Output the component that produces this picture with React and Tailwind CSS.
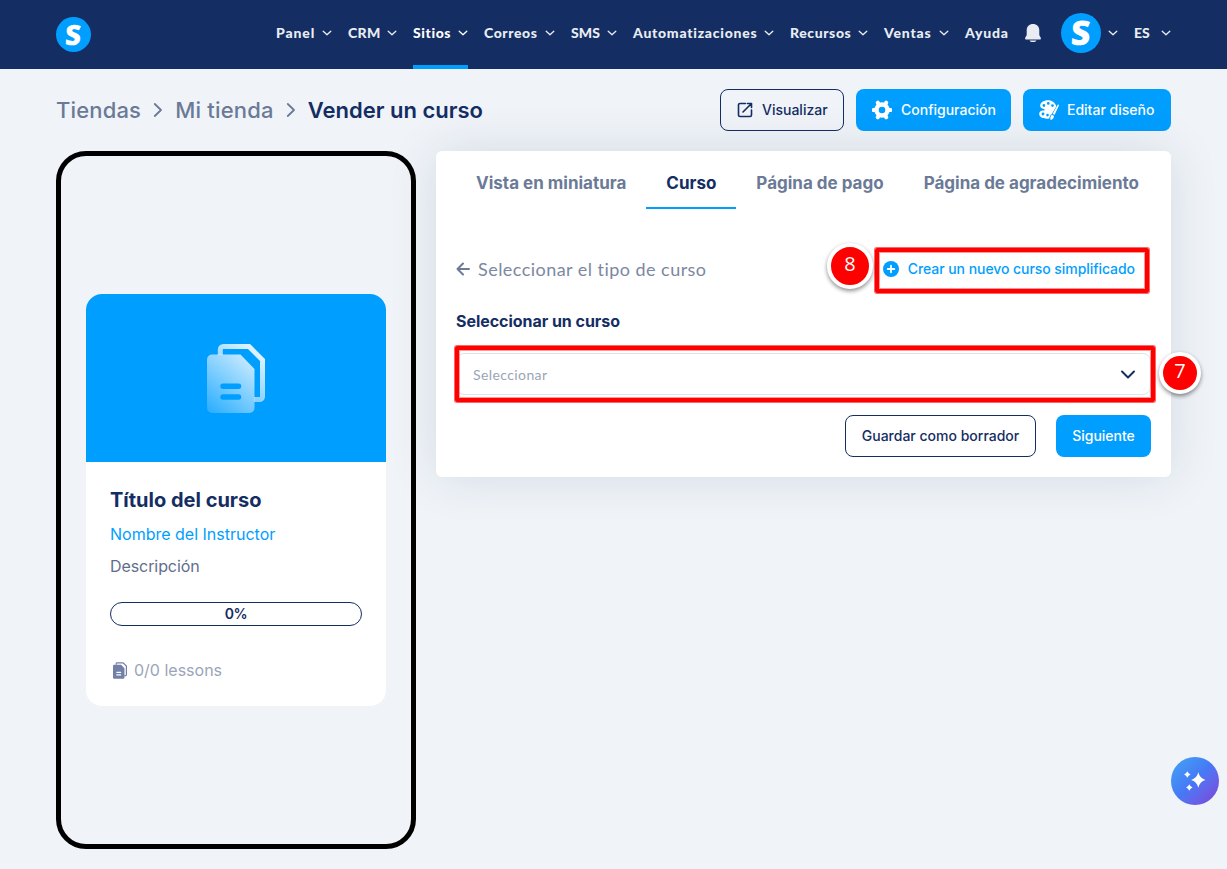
import clsx from 'clsx'

const navItems = [
  { label: 'Panel', width: 'w-14', spacing: 'tracking-[0.9px]' },
  { label: 'CRM', width: 'w-[49px]', spacing: 'tracking-[0.3px]' },
  { label: 'Sitios', width: 'w-[55px]', spacing: 'tracking-[0.6px]', active: true },
  { label: 'Correos', width: 'w-[71px]', spacing: 'tracking-[0.6px]' },
  { label: 'SMS', width: 'w-[46px]', spacing: 'tracking-[0.1px]' },
  { label: 'Automatizaciones', width: 'w-[141px]', spacing: 'tracking-[0.74px]' },
  { label: 'Recursos', width: 'w-[78px]', spacing: 'tracking-[0.6px]' },
  { label: 'Ventas', width: 'w-[65px]', spacing: 'tracking-[0.8px]' },
]

const tabs = [
  { label: 'Vista en miniatura' },
  { label: 'Curso', active: true },
  { label: 'Página de pago' },
  { label: 'Página de agradecimiento' },
]

function NavChevron() {
  return (
    <svg className="mt-[-1px] h-2.5 w-2.5 shrink-0" viewBox="0 0 10 10" fill="none" stroke="currentColor" strokeWidth="1.3" strokeLinecap="round" strokeLinejoin="round">
      <path d="M1.2 3.2 5 6.8 8.8 3.2" />
    </svg>
  )
}

function Logo({ className }) {
  return (
    <div className={clsx('flex shrink-0 items-center justify-center rounded-full bg-[#009eff] font-["Open_Sans"] leading-none font-extrabold text-white', className)}>
      <span className="-skew-x-3">S</span>
    </div>
  )
}

function ChevronRight() {
  return (
    <svg className="h-4 w-2.5" viewBox="0 0 10 16" fill="none" stroke="#6b7a96" strokeWidth="1.8" strokeLinecap="round" strokeLinejoin="round">
      <path d="M1.8 2 8 8l-6.200 6" />
    </svg>
  )
}

function PagesIcon({ className, children, fill }) {
  return (
    <svg className={className} viewBox="0 0 58 69" fill="none">
      <defs>{children}</defs>
      <path d="M13.300 11V5.500a3 3 0 0 1 3-3H42L55.500 16V52.500a3 3 0 0 1-3 3H47" stroke={fill} strokeWidth="5" />
      <path fillRule="evenodd" fill={fill} d="M5 10.500H33.500L47.500 25V64a5 5 0 0 1-5 5H5a5 5 0 0 1-5-5V15.500a5 5 0 0 1 5-5ZM16 39.500a2.750 2.750 0 0 0 0 5.500H31.500a2.750 2.750 0 0 0 0-5.500ZM16 50.200a2.750 2.750 0 0 0 0 5.500H31.500a2.750 2.750 0 0 0 0-5.500Z" />
    </svg>
  )
}

function Header() {
  return (
    <header className="flex h-[69px] items-center bg-[#142d63] pr-14 pl-14">
      <Logo className="h-[35px] w-[35px] pb-px text-[28px]" />
      <nav className="ml-auto flex h-full items-center gap-4 font-[Lato] text-sm font-black text-[#e9edf3]">
        {navItems.map((item) => (
          <div key={item.label} className={clsx('flex h-full items-center justify-between border-y-4 border-t-transparent pb-[3px]', item.width, item.active ? 'border-b-[#009eff] text-white' : 'border-b-transparent')}>
            <span className={item.spacing}>{item.label}</span>
            <NavChevron />
          </div>
        ))}
        <span className="w-11 pb-[3px] tracking-[0.8px]">Ayuda</span>
        <svg className="mb-[3px] h-[18px] w-4" viewBox="0 0 16 18" fill="currentColor">
          <path d="M8 0C4.300 0 1.700 2.600 1.700 6v4.800c0 1.300-1.600 2.200-1.600 3.600 0 .6.400 1.100 1 1.100h13.800c.6 0 1-.5 1-1.100 0-1.400-1.600-2.300-1.600-3.600V6C14.300 2.600 11.700 0 8 0ZM4.500 16.500h7c-.5 1-1.800 1.500-3.500 1.500s-3-.5-3.500-1.500Z" />
        </svg>
        <div className="ml-1 flex items-center gap-[7px] pb-[3px]">
          <Logo className="h-10 w-10 pb-0.5 text-[34px]" />
          <NavChevron />
        </div>
        <div className="flex w-[37px] items-center justify-between pb-[3px]">
          <span>ES</span>
          <NavChevron />
        </div>
      </nav>
    </header>
  )
}

function Toolbar() {
  return (
    <div className="flex h-[82px] items-center justify-between px-14">
      <div className="flex items-center text-[22px] font-medium text-[#6b7a96]">
        <span className="tracking-[0.16px]">Tiendas</span>
        <span className="mx-3"><ChevronRight /></span>
        <span className="tracking-[0.2px]">Mi tienda</span>
        <span className="mx-3"><ChevronRight /></span>
        <span className="font-semibold text-[#142d63]">Vender un curso</span>
      </div>
      <div className="flex gap-3 text-sm font-medium">
        <button className="flex h-[42px] w-[124px] items-center gap-[9px] rounded-lg border border-[#142d63] pl-4 text-[#142d63]">
          <svg className="h-4 w-4" viewBox="0 0 16 16" fill="none" stroke="currentColor" strokeWidth="1.6" strokeLinecap="round" strokeLinejoin="round">
            <path d="M8.500 1.500H3a1.500 1.500 0 0 0-1.500 1.500v10A1.500 1.500 0 0 0 3 14.500h10a1.500 1.500 0 0 0 1.500-1.500V8M10.500 1.500h4V5.500M14.500 1.500 6 10" />
          </svg>
          Visualizar
        </button>
        <button className="flex h-[42px] w-[155px] items-center gap-[9px] rounded-lg bg-[#009eff] pl-4 text-white">
          <svg className="h-5 w-5" viewBox="0 0 20 20" fill="none" stroke="currentColor">
            <circle cx="10" cy="10" r="5.500" strokeWidth="4.400" />
            <path d="M1.600 10h2M16.400 10h2M5.800 2.700l1 1.700M13.200 15.600l1 1.700M14.200 2.700l-1 1.700M6.800 15.600l-1 1.700" strokeWidth="4" strokeLinecap="round" strokeLinejoin="round" />
          </svg>
          Configuración
        </button>
        <button className="flex h-[42px] w-[148px] items-center gap-2 rounded-lg bg-[#009eff] pl-4 text-white">
          <svg className="h-5 w-5" viewBox="0 0 20 20" fill="currentColor">
            <path fillRule="evenodd" d="M9 .2C4.500.2 1.200 2.600 1.200 5.800c0 2.200 1.600 2.600 3.600 3.200 1.400.5 1 1.700-.4 1.600C1.800 10.400.2 11.800.2 14c0 3 3.500 4.700 7.600 4.700.9 0 1.700-.1 2.500-.3.200-1.800 1-3.300 2.300-4.200L17.300 6.500C16.500 2.800 13 .2 9 .2ZM4.900 4.100a1.400 1.400 0 1 1 0 2.800 1.400 1.400 0 0 1 0-2.800ZM9.300 2a1.400 1.400 0 1 1 0 2.800 1.400 1.400 0 0 1 0-2.800ZM13.500 4.200a1.400 1.400 0 1 1 0 2.800 1.400 1.400 0 0 1 0-2.800ZM4 12.600a1.400 1.400 0 1 1 0 2.800 1.400 1.400 0 0 1 0-2.800ZM8.500 13.800a1.300 1.300 0 1 1 0 2.600 1.300 1.300 0 0 1 0-2.600Z" />
            <path d="M19.700 4.700c-.5-.3-1 0-1.300.5l-4.700 8.600 1.800 1.100 4.300-9.200c.2-.4.200-.8-.1-1ZM13 14.800l2 1.300c-.2 2.200-1.300 3.600-3.500 3.800-.4-1.800 0-4.200 1.500-5.100Z" />
          </svg>
          Editar diseño
        </button>
      </div>
    </div>
  )
}

function PhonePreview() {
  return (
    <section className="flex h-[698px] w-[360px] shrink-0 items-center rounded-[30px] border-[5px] border-black px-[25px]">
      <div className="h-[412px] w-full overflow-hidden rounded-2xl bg-white">
        <div className="flex h-[168px] items-center justify-center bg-[#009eff]">
          <PagesIcon className="h-[69px] w-[58px]" fill="url(#pages)">
            <linearGradient id="pages" gradientUnits="userSpaceOnUse" x1="52" y1="6" x2="0" y2="69">
              <stop stopColor="#fff" stopOpacity="0.9" />
              <stop offset="1" stopColor="#fff" stopOpacity="0.15" />
            </linearGradient>
          </PagesIcon>
        </div>
        <div className="px-6 pt-6">
          <h2 className="text-xl leading-7 font-bold text-[#142d63]">Título del curso</h2>
          <p className="mt-2 text-base text-[#009eff]">Nombre del Instructor</p>
          <p className="mt-2 text-base tracking-[-0.08px] text-[#5f6e8c]">Descripción</p>
          <div className="mt-6 flex h-6 items-center justify-center rounded-full border border-[#142d63] text-sm font-semibold tracking-[-0.5px] text-[#142d63]">0%</div>
          <div className="mt-8 flex items-center gap-[7px] pl-[3px] text-base text-[#9aa5b8]">
            <PagesIcon className="h-[17px] w-3.5" fill="#7280a7" />
            0/0 lessons
          </div>
        </div>
      </div>
    </section>
  )
}

function Badge({ className, children }) {
  return (
    <span className={clsx('absolute flex items-center justify-center rounded-full border-4 border-white bg-[#fe0000] pb-1 font-["Open_Sans"] text-xl leading-none font-medium text-white shadow-[0_2px_4px_rgba(0,0,0,0.45)]', className)}>
      {children}
    </span>
  )
}

function CoursePanel() {
  return (
    <section className="relative h-[326px] w-[735px] rounded-md bg-white px-5 shadow-[0_0_50px_rgba(20,45,60,0.12)]">
      <div className="flex h-[58px]">
        {tabs.map((tab) => (
          <div key={tab.label} className={clsx('flex items-center border-b-2 px-5 pt-2 text-[17px] font-bold whitespace-nowrap', tab.active ? 'border-[#009eff] text-[#142d63]' : 'border-transparent text-[#6b7a96]')}>
            <span className="pt-px">{tab.label}</span>
          </div>
        ))}
      </div>
      <div className="mt-[46px] flex h-7 items-center justify-between">
        <div className="flex items-center gap-2 font-[Lato] text-lg tracking-[0.46px] text-[#7c889f]">
          <svg className="h-3.5 w-3.5" viewBox="0 0 14 14" fill="none" stroke="#6b7a96" strokeWidth="2" strokeLinecap="round" strokeLinejoin="round">
            <path d="M7 1.500 1.500 7 7 12.500M1.500 7H13" />
          </svg>
          Seleccionar el tipo de curso
        </div>
        <div className="flex items-center gap-[9px] pr-4 text-sm font-medium tracking-[-0.06px] text-[#009eff]">
          <svg className="h-4 w-4" viewBox="0 0 16 16">
            <circle cx="8" cy="8" r="8" fill="#009eff" />
            <path d="M8 4.700v6.600M4.700 8h6.600" stroke="#fff" strokeWidth="1.800" strokeLinecap="round" />
          </svg>
          Crear un nuevo curso simplificado
        </div>
      </div>
      <h3 className="mt-[26px] text-base font-bold tracking-[-0.04px] text-[#142d63]">Seleccionar un curso</h3>
      <div className="mt-5 flex h-[42px] items-center justify-between rounded-lg border border-[#dfe4e8] pr-3.5 pl-4 font-[Lato] text-sm tracking-[0.4px] text-[#9aa5b6]">
        <span className="pt-0.5">Seleccionar</span>
        <svg className="h-4 w-4" viewBox="0 0 16 16" fill="none" stroke="#142d63" strokeWidth="2" strokeLinecap="round" strokeLinejoin="round">
          <path d="M2 5.500l6 6 6-6" />
        </svg>
      </div>
      <div className="mt-5 flex justify-end gap-5 text-sm font-medium">
        <button className="h-[42px] w-[191px] rounded-lg border border-[#142d63] text-[#142d63]">Guardar como borrador</button>
        <button className="h-[42px] w-[95px] rounded-lg bg-[#009eff] text-white">Siguiente</button>
      </div>

      {/* Marcas de los pasos */}
      <div className="absolute top-[97px] left-[439px] h-[45px] w-[274px] rounded-xs border-4 border-[#fe0000] shadow-[0_0_0_1px_rgba(254,0,0,0.6),inset_0_0_0_1px_rgba(254,0,0,0.4)]" />
      <div className="absolute top-[195px] left-[19px] h-[56px] w-[700px] rounded-xs border-4 border-[#fe0000] shadow-[0_0_0_1px_rgba(254,0,0,0.6),inset_0_0_0_1px_rgba(254,0,0,0.4)]" />
      <Badge className="top-[92px] left-[391px] h-[46px] w-[46px]">8</Badge>
      <Badge className="top-[201px] left-[723px] h-[42px] w-[42px]">7</Badge>
    </section>
  )
}

export default function App() {
  return (
    <div className="relative h-[869px] w-[1227px] overflow-hidden bg-[#f0f4f9] font-[Inter]">
      <Header />
      <Toolbar />
      <main className="flex items-start gap-5 px-14">
        <PhonePreview />
        <CoursePanel />
      </main>
      <button className="absolute right-2 bottom-16 flex h-12 w-12 items-center justify-center rounded-full bg-linear-to-br from-[#42a5f5] via-[#4678f6] to-[#7c3fd6]">
        <svg className="h-6 w-6" viewBox="0 0 24 24" fill="#fff">
          <path d="M15.300 3.300q1.400 6 7.200 7.700-5.800 1.700-7.200 7.700-1.400-6-7.200-7.700 5.800-1.700 7.200-7.700ZM4.300 2.300q.9 2.400 3.200 3.200-2.300.8-3.200 3.200-.9-2.400-3.200-3.200 2.300-.8 3.200-3.200ZM6.300 15.300q.9 2.400 3.200 3.200-2.300.8-3.200 3.200-.9-2.400-3.200-3.200 2.300-.8 3.200-3.200Z" />
        </svg>
      </button>
    </div>
  )
}
